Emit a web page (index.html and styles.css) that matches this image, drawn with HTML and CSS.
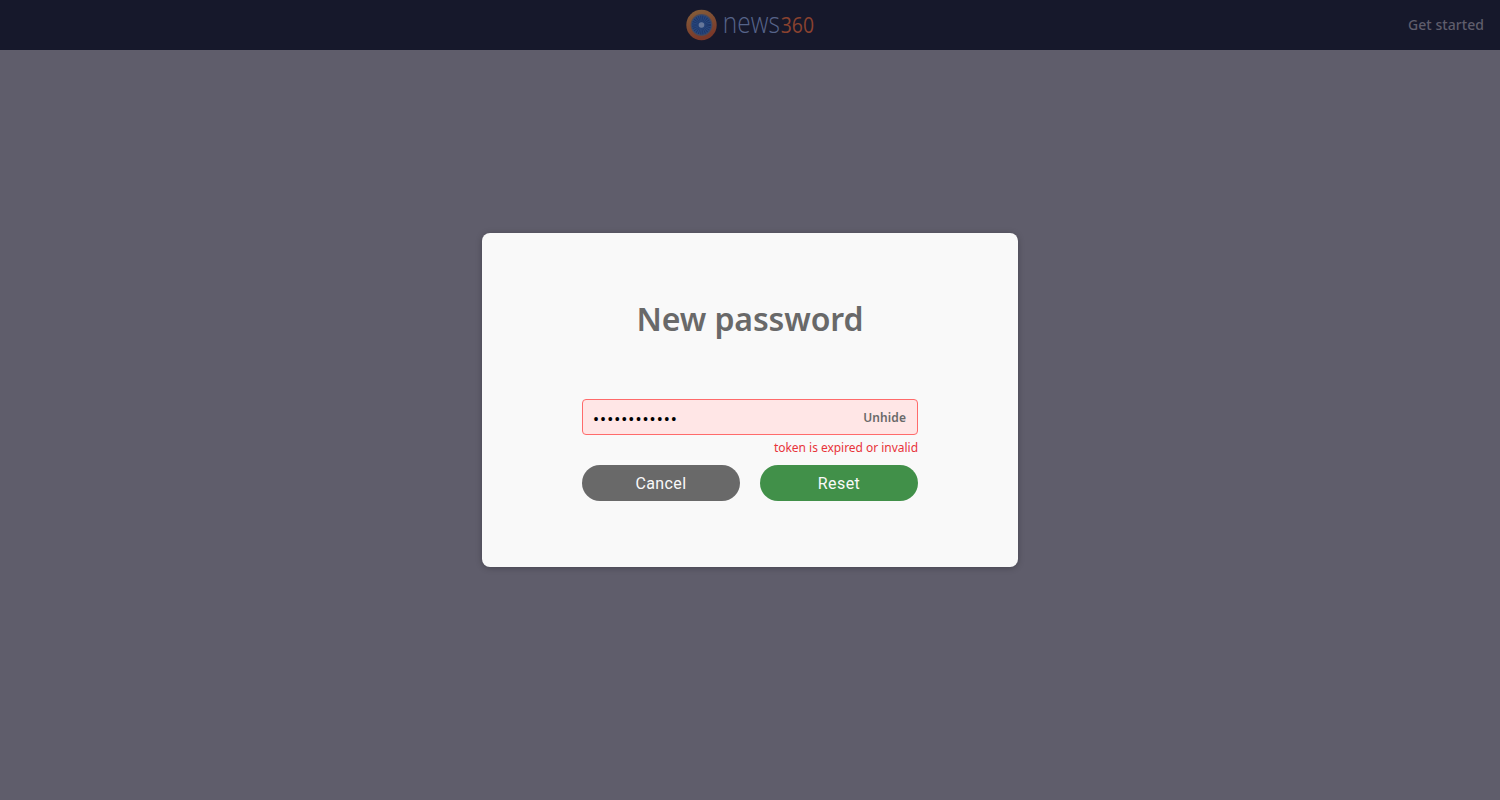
FILE: index.html
```html
<!DOCTYPE html>
<html lang="en">
<head>
<meta charset="utf-8">
<title>News360 - New password</title>
<link rel="stylesheet" href="styles.css">
</head>
<body>
<header class="header">
  <svg class="logo" width="130" height="50" viewBox="0 -8 130 50" role="img" aria-label="news360">
    <defs>
      <linearGradient id="ring" x1="0" y1="0" x2="0.35" y2="1">
        <stop offset="0" stop-color="#85603a"/>
        <stop offset="1" stop-color="#7a3829"/>
      </linearGradient>
    </defs>
    <circle cx="16.5" cy="17" r="15.2" fill="url(#ring)"/>
    <circle cx="16.5" cy="17" r="10.9" fill="#454a5f"/>
    <circle cx="16.5" cy="17" r="9.8" fill="#28477e"/>
    <circle cx="16.5" cy="17" r="6.2" fill="none" stroke="#1d3566" stroke-width="6.5" stroke-dasharray="0.65 0.97"/>
    <circle cx="16.5" cy="17" r="2.8" fill="#66779a"/>
    <text class="logo-news" x="37.8" y="24.8" textLength="57" lengthAdjust="spacingAndGlyphs">news</text>
    <text class="logo-num" x="95.7" y="24.6" textLength="33.3" lengthAdjust="spacingAndGlyphs">360</text>
  </svg>
  <a class="start">Get started</a>
</header>
<main class="page">
  <form class="dialog">
    <h1 class="title">New password</h1>
    <div class="field">
      <input class="password" type="password" value="abcdefghijkl" aria-label="New password">
      <span class="unhide">Unhide</span>
    </div>
    <p class="error">token is expired or invalid</p>
    <div class="actions">
      <button class="button cancel" type="button">Cancel</button>
      <button class="button reset" type="button">Reset</button>
    </div>
  </form>
</main>
</body>
</html>
```
FILE: styles.css
```css
* { box-sizing: border-box; }
body {
  margin: 0;
  height: 100vh;
  overflow: hidden;
  background: #5f5d6b;
  font-family: "Noto Sans", sans-serif;
}
.header {
  height: 50px;
  background: #16182b;
  display: grid;
  grid-template-columns: 1fr auto 1fr;
  align-items: center;
  padding: 0 16px;
}
.logo { grid-column: 2; display: block; overflow: visible; }
.logo-news { font: 300 28.5px "Open Sans", sans-serif; fill: #56648a; }
.logo-num { font: 500 22.5px "Open Sans", sans-serif; fill: #8a422f; }
.start {
  justify-self: end;
  padding-bottom: 2px;
  font-size: 14px;
  font-weight: 500;
  letter-spacing: 0.05px;
  color: #5f5d6b;
}
.page {
  height: 750px;
  padding-bottom: 50px;
  display: flex;
  align-items: center;
  justify-content: center;
}
.dialog {
  width: 536px;
  height: 334px;
  padding: 64px 100px 66px;
  background: #f9f9f9;
  border-radius: 8px;
  box-shadow: 0 1px 6px rgba(0, 0, 0, 0.25);
}
.title {
  margin: 0 0 58px;
  font-size: 32px;
  line-height: 44px;
  font-weight: 600;
  letter-spacing: -0.12px;
  text-align: center;
  color: #696969;
}
.field {
  height: 36px;
  display: flex;
  align-items: center;
  padding: 0 11px 0 10px;
  background: #ffe6e6;
  border: 1px solid #ff6b6b;
  border-radius: 4px;
}
.password {
  flex: 1;
  min-width: 0;
  border: 0;
  padding: 4px 0 0;
  outline: 0;
  background: none;
  color: #000;
  font: 18px Roboto, sans-serif;
  letter-spacing: 1px;
}
.unhide { font-size: 12px; font-weight: 600; color: #696969; letter-spacing: 0.08px; }
.error {
  margin: 5px 0 9px;
  font-size: 12px;
  line-height: 16px;
  text-align: right;
  letter-spacing: -0.03px;
  color: #e8343a;
}
.actions { display: flex; gap: 20px; }
.button {
  flex: 1;
  height: 36px;
  padding: 0;
  border: 0;
  border-radius: 18px;
  color: #f9f9f9;
  font: 400 16px Roboto, sans-serif;
  letter-spacing: 0.4px;
}
.cancel { background: #696969; }
.reset { background: #419049; }
```
